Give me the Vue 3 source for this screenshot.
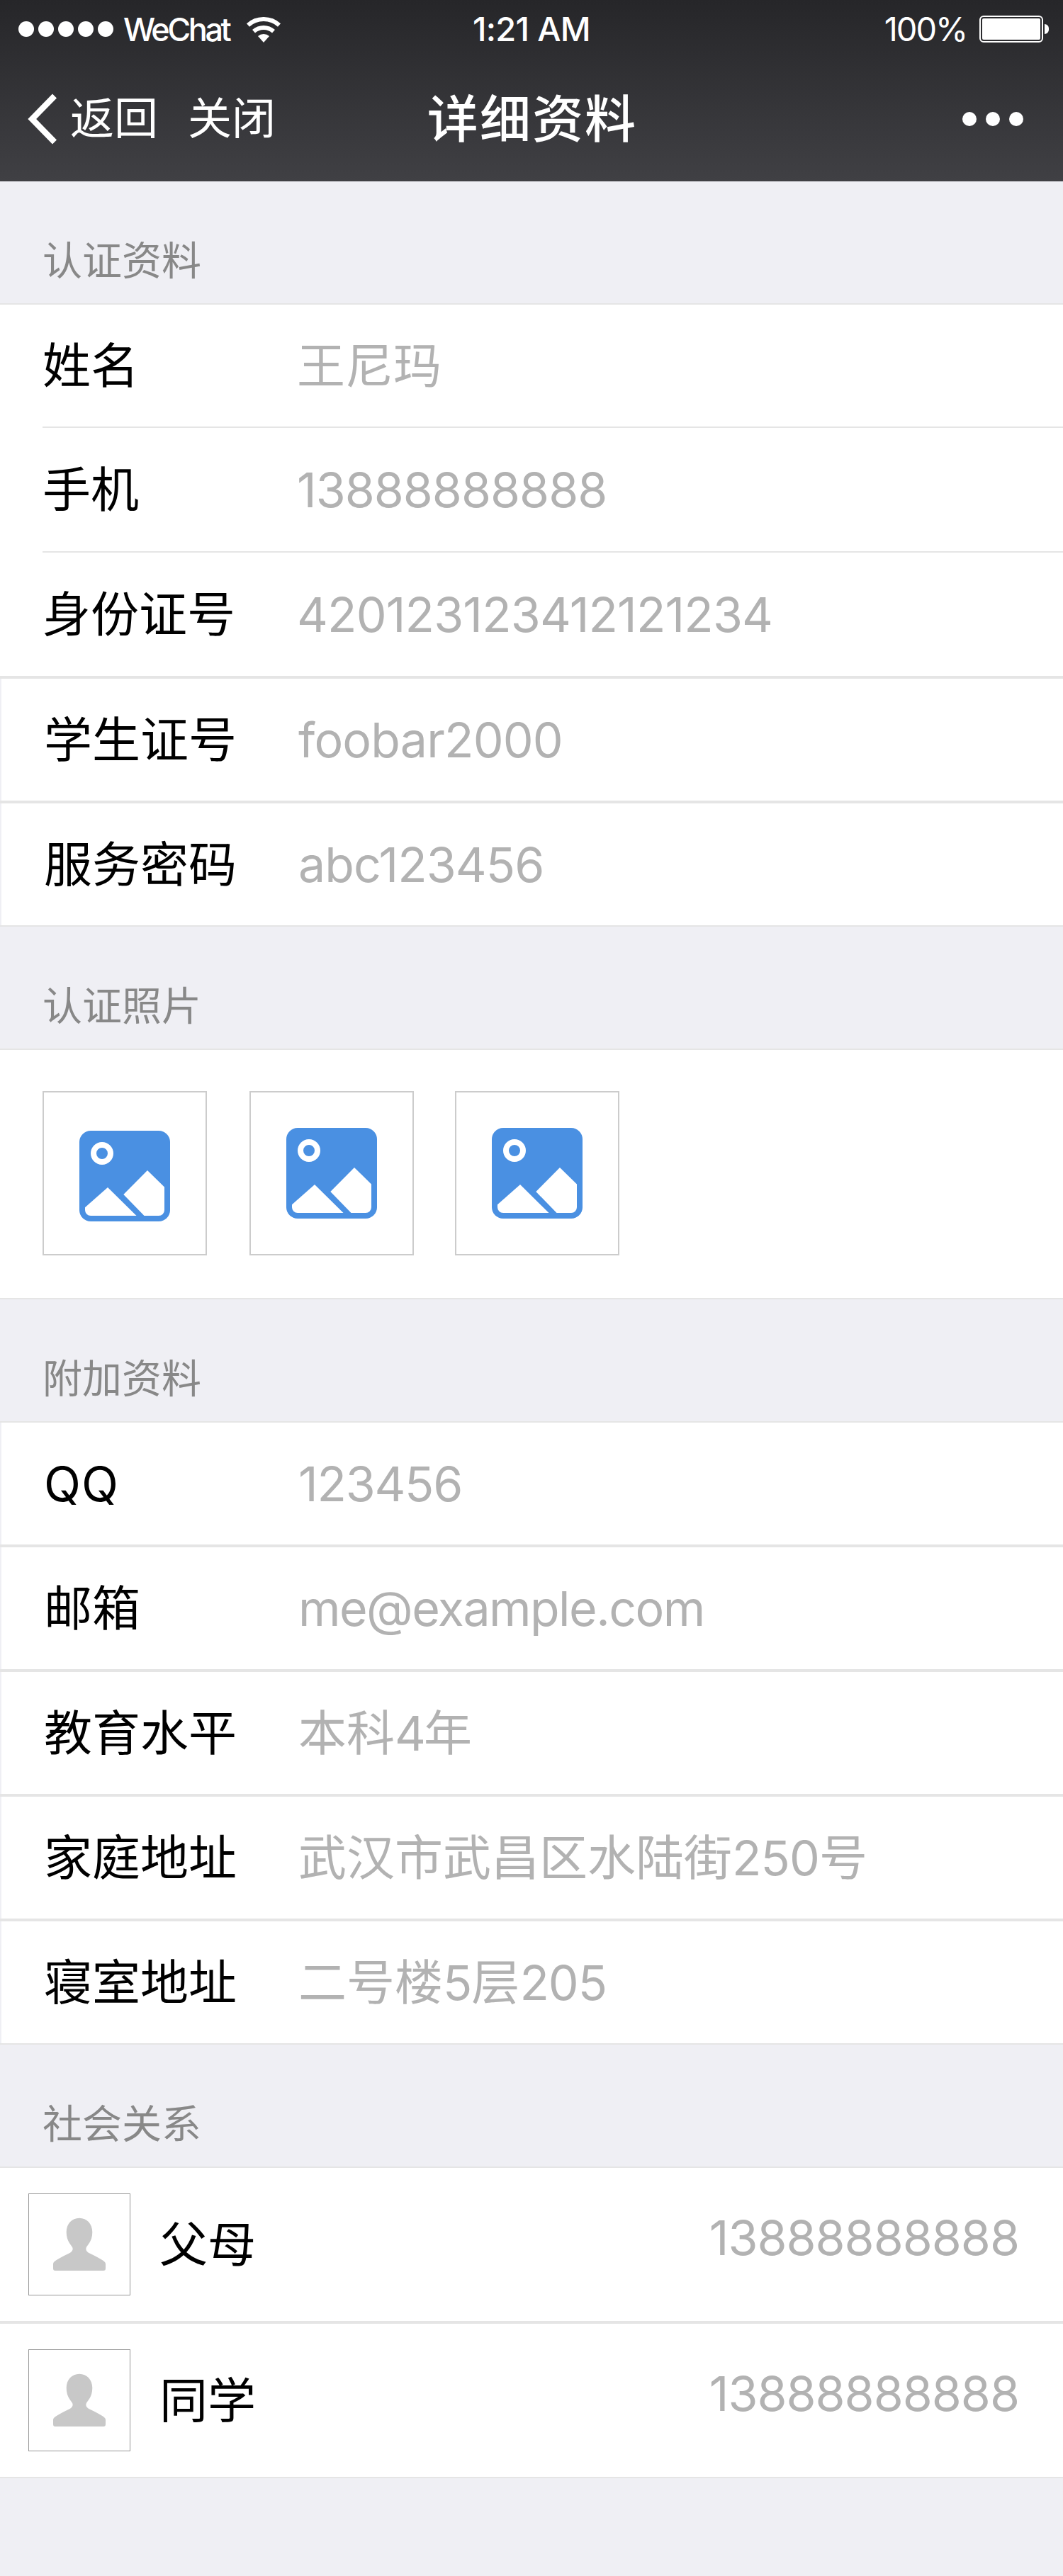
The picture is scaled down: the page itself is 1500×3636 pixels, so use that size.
<script setup>
const basic = [
  { label: '姓名', value: '王尼玛', line: 'inset' },
  { label: '手机', value: '13888888888', line: 'inset', gap: -1 },
  { label: '身份证号', value: '420123123412121234', line: 'last', gap: -0.85 },
  { label: '学生证号', value: 'foobar2000', line: 'full', gap: -0.8 },
  { label: '服务密码', value: 'abc123456', line: 'full', gap: -0.95 }
]

const extra = [
  { label: 'QQ', value: '123456', line: 'full', gap: -1.25, labelGap: 1 },
  { label: '邮箱', value: 'me@example.com', line: 'full', gap: -1.55 },
  { label: '教育水平', value: '本科4年', line: 'full', gap: -3 },
  { label: '家庭地址', value: '武汉市武昌区水陆街250号', line: 'full', gap: -0.9 },
  { label: '寝室地址', value: '二号楼5层205', line: 'full', gap: -1 }
]

const groups = { basic, extra }

const contacts = [
  { name: '父母', phone: '13888888888' },
  { name: '同学', phone: '13888888888' }
]

// Latin runs are tracked tighter than the Chinese characters around them.
const runs = (text) => text.match(/[\x20-\x7e]+|[^\x20-\x7e]+/g)
const isLatin = (run) => /^[\x20-\x7e]/.test(run)
</script>

<template>
  <div class="page">
    <header class="header">
      <div class="status">
        <div class="carrier">
          <span class="signal"><i v-for="n in 5" :key="n"></i></span>
          <span class="carrier-name">WeChat</span>
          <svg class="wifi" width="48" height="36" viewBox="0 0 48 36">
            <path d="M2 11.4A33 33 0 0 1 46 11.4" fill="none" stroke="#fff" stroke-width="6" />
            <path d="M10 20.3A21 21 0 0 1 38 20.3" fill="none" stroke="#fff" stroke-width="6" />
            <path d="M24 36L16 27A12 12 0 0 1 32 27Z" fill="#fff" />
          </svg>
        </div>
        <div class="time">1:21 AM</div>
        <div class="power">
          <span class="percent">100%</span>
          <span class="battery"><i></i></span>
          <span class="battery-tip"></span>
        </div>
      </div>
      <nav class="nav">
        <div class="nav-left">
          <svg class="chevron" width="42" height="72" viewBox="0 0 42 72">
            <path d="M38 3.5L6.2 36L38 68.5" fill="none" stroke="#fff" stroke-width="8.4" />
          </svg>
          <span class="back">返回</span>
          <span class="close">关闭</span>
        </div>
        <h1 class="title">详细资料</h1>
        <div class="more"><i></i><i></i><i></i></div>
      </nav>
    </header>

    <h2 class="section">认证资料</h2>
    <div>
      <div v-for="row in groups.basic" :key="row.label" class="row" :class="row.line">
        <span class="label">{{ row.label }}</span>
        <span class="value"><span v-for="(run, i) in runs(row.value)" :key="i" :style="isLatin(run) ? { letterSpacing: row.gap + 'px' } : null">{{ run }}</span></span>
      </div>
    </div>

    <h2 class="section">认证照片</h2>
    <div class="photos">
      <div v-for="n in 3" :key="n" class="photo">
        <svg width="128" height="128" viewBox="0 0 128 128">
          <rect width="128" height="128" rx="16" fill="#4a90e2" />
          <circle cx="32" cy="32" r="12" fill="none" stroke="#fff" stroke-width="8" />
          <path d="M40 80L8 108.3V112A8 8 0 0 0 16 120H80.5Z" fill="#fff" />
          <path d="M96 56L62.3 90L91.5 120H112A8 8 0 0 0 120 112V79.5Z" fill="#fff" />
        </svg>
      </div>
    </div>

    <h2 class="section">附加资料</h2>
    <div>
      <div v-for="row in groups.extra" :key="row.label" class="row" :class="row.line">
        <span class="label" :style="row.labelGap ? { letterSpacing: row.labelGap + 'px' } : null">{{ row.label }}</span>
        <span class="value"><span v-for="(run, i) in runs(row.value)" :key="i" :style="isLatin(run) ? { letterSpacing: row.gap + 'px' } : null">{{ run }}</span></span>
      </div>
    </div>

    <h2 class="section">社会关系</h2>
    <div v-for="contact in contacts" :key="contact.name" class="contact">
      <div class="avatar">
        <svg width="142" height="142" viewBox="1 1 142 142">
          <path
            d="M35 106V99.5C35 97 37.5 95.5 41 93.3C47 89.7 52 87 57.5 84.5C62 82.3 63.3 79.5 62.3 76.5C61 73 53.7 68 53.7 54.5C53.7 43 61.5 34.7 72 34.7S90.3 43 90.3 54.5C90.3 68 83 73 81.7 76.5C80.7 79.5 82 82.3 86.5 84.5C92 87 97 89.7 103 93.3C106.5 95.5 109 97 109 99.5V106Q109 109 106 109H38Q35 109 35 106Z"
            fill="#c8c8c8"
          />
        </svg>
      </div>
      <span class="contact-name">{{ contact.name }}</span>
      <span class="phone">{{ contact.phone }}</span>
    </div>
  </div>
</template>

<style>
body {
  margin: 0;
  background: #efeff4;
}
</style>

<style scoped>
.page {
  width: 1500px;
  height: 3636px;
  background: #efeff4;
  color: #000;
  font-family: Inter, "Noto Sans CJK SC", sans-serif;
  font-size: 68px;
  line-height: 80px;
  white-space: nowrap;
  overflow: hidden;
}

.header {
  box-sizing: border-box;
  height: 256px;
  color: #fff;
  background: linear-gradient(#262629, #404044);
}

.status,
.nav {
  display: grid;
  grid-template-columns: 1fr auto 1fr;
  align-items: center;
}

.status {
  height: 82px;
  font-size: 47px;
  line-height: 60px;
}

.carrier,
.power,
.nav-left {
  display: flex;
  align-items: center;
}

.carrier {
  padding-left: 26px;
}

.signal {
  display: flex;
  gap: 6px;
  width: 134px;
  margin-right: 14px;
}

.signal i {
  width: 22px;
  height: 22px;
  border-radius: 50%;
  background: #fff;
}

.carrier-name {
  width: 174px;
  padding-top: 1px;
  font-size: 45px;
  font-weight: 450;
  letter-spacing: -3.5px;
}

.wifi {
  margin-top: 2px;
}

.time {
  font-weight: 450;
  letter-spacing: -0.7px;
}

.power {
  justify-content: flex-end;
  padding-right: 20px;
}

.percent {
  margin-right: 18px;
  letter-spacing: -2.1px;
}

.battery {
  box-sizing: border-box;
  width: 90px;
  height: 38px;
  padding: 2px;
  border: 2px solid #fff;
  border-radius: 6px;
}

.battery i {
  display: block;
  height: 30px;
  border-radius: 2px;
  background: #fff;
}

.battery-tip {
  width: 6px;
  height: 14px;
  margin-left: 2px;
  border-radius: 0 7px 7px 0;
  background: #fff;
}

.nav {
  height: 171px;
}

.nav-left {
  padding-left: 39px;
  font-size: 62px;
}

.chevron {
  margin-right: 18px;
}

.close {
  margin-left: 42px;
}

.title {
  margin: 0;
  padding-left: 2px;
  font-size: 72px;
  font-weight: 500;
  letter-spacing: 2.1px;
}

.more {
  display: flex;
  justify-content: flex-end;
  gap: 13px;
  padding-right: 56px;
}

.more i {
  width: 20px;
  height: 20px;
  border-radius: 50%;
  background: #fff;
}

.section {
  box-sizing: border-box;
  height: 172px;
  margin: 0;
  padding: 82px 0 0 60px;
  color: #888;
  font-size: 56px;
  font-weight: 400;
  line-height: 60px;
}

.section + div {
  border-top: 2px solid #e5e5e5;
}

.row {
  box-sizing: border-box;
  display: flex;
  align-items: center;
  height: 176px;
  padding-left: 60px;
  background: #fff;
}

.row:first-child {
  height: 174px;
}

.inset {
  background: linear-gradient(#e5e5e5, #e5e5e5) 60px 100% / 100% 2px no-repeat #fff;
  padding-bottom: 2px;
}

.last {
  border-bottom: 2px solid #e5e5e5;
}

.full {
  padding-left: 62px;
  border: solid #e5e5e5;
  border-width: 2px 0;
  box-shadow: inset 2px 0 #efeff4;
}

.full:first-child {
  border-top: 0;
}

.label {
  width: 359px;
}

.value,
.phone {
  color: #b2b2b2;
  font-weight: 370;
}

.photos {
  box-sizing: border-box;
  display: flex;
  height: 354px;
  padding: 58px 60px;
  border-bottom: 2px solid #e5e5e5;
  background: #fff;
}

.photo {
  box-sizing: border-box;
  width: 232px;
  height: 232px;
  margin-right: 60px;
  padding: 50px;
  border: 2px solid #ccc;
}

.photo:first-child {
  padding-top: 54px;
}

.photo:nth-child(2) {
  margin-right: 58px;
}

.photo svg {
  display: block;
}

.contact {
  box-sizing: border-box;
  display: flex;
  align-items: center;
  height: 220px;
  padding: 0 62px 0 40px;
  border: solid #e5e5e5;
  border-width: 2px 0;
  background: #fff;
}

.avatar {
  box-sizing: border-box;
  width: 144px;
  height: 144px;
  margin-right: 41px;
  border: 1px solid #979797;
}

.avatar svg {
  display: block;
}

.phone {
  margin-left: auto;
  padding-bottom: 21px;
  letter-spacing: -1px;
}
</style>
